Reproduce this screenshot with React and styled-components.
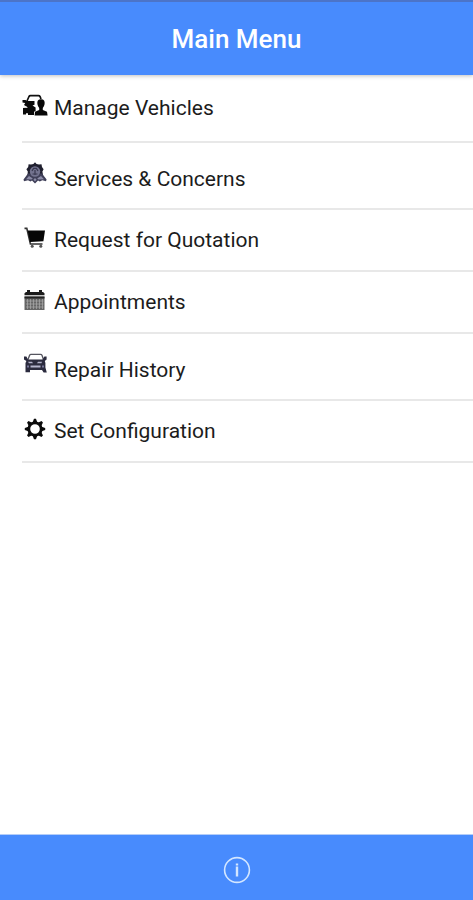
import React from "react";
import {createGlobalStyle, styled} from "styled-components";

const VehiclesIcon = () => (
  <Icon>
    <path d="M5 7 7 2.5Q7.4 1.7 8.4 1.7H16.5Q17.6 1.7 18.1 2.7L19 5" fill="none" stroke="#111" strokeWidth="1.7"/>
    <path d="M0.5 6H3.5L5 7H12.5V10.8L10.5 11.6 13.6 13.4V17L12 17.8V21H6V19.2H4V20.4H1V14L6 13.4 2 11 3.2 9 0.5 8.4Z" fill="#0a0a0a"/>
    <path d="M1.5 12.8 5 13.3" stroke="#eee" strokeWidth="0.9"/>
    <path d="M19 5.3C22 5.3 23 7 22.6 10 22.3 12 21.3 13 20.8 14V16L25 17.8 25.6 21.5H12.6L13 17.8 17.2 16V14C16.7 13 15.7 12 15.4 10 15 7 16 5.3 19 5.3Z" fill="#080808"/>
  </Icon>
);

const ServicesIcon = () => (
  <Icon>
    <path d="M11.4 3 13 1.2 14.6 3 17 3.4 19.5 3.2 20 6 21.6 8.3 20.4 10.5 21 14 13 19 5.5 14 5.8 10.5 4.4 8.3 6.2 6 6.6 3.2 9 3.4Z" fill="#20202f"/>
    <path d="M6 12.5 1.5 18.6 2 20.2 6 19.2 8.5 20.5 10 19.4 13 22.5 16 19.4 17.8 20.5 20.3 19.2 24 20.2 24.6 18.6 20 12.5Z" fill="#3f3f58"/>
    <circle cx="13" cy="10.5" r="5.2" fill="#73738f"/>
    <path d="M10 10 11.6 7.4H14.4L16 10M10.5 13H15.5M13 9V14" fill="none" stroke="#38384f" strokeWidth="1.2"/>
    <path d="M7 15 10.8 17.4 9.4 18.6 4 18.3ZM19 15 15.2 17.4 16.6 18.6 22 18.3ZM13 17 14.6 18.8 13 20.4 11.4 18.8Z" fill="#8b8ba6"/>
  </Icon>
);

const CartIcon = () => (
  <Icon>
    <path d="M2.5 2.4H4.8L8.4 18H20.5" fill="none" stroke="#333" strokeWidth="1.6"/>
    <path d="M5.6 4.6H23L21.4 15.2 8 16Z" fill="#060606"/>
    <circle cx="10.2" cy="20.2" r="1.5" fill="#555"/>
    <circle cx="18.8" cy="20.2" r="1.5" fill="#555"/>
  </Icon>
);

const CalendarIcon = () => (
  <Icon>
    <path d="M2.5 7.2V5.3L4 4H5V2H8V4H17V2H20V4H21L22.5 5.3V7.2Z" fill="#1c1c1c"/>
    <path d="M2.5 8.5H22.5V22H2.5Z" fill="#666"/>
    <path d="M2.5 8.5H22.5V10.5H2.5Z" fill="#222"/>
    <path d="M4 13H21.5M4 16H21.5M4 19H21.5M5.5 11V21M8.5 11V21M11.5 11V21M14.5 11V21M17.5 11V21M20.5 11V21" stroke="#aaa" strokeWidth="0.7"/>
  </Icon>
);

const RepairIcon = () => (
  <Icon>
    <path d="M5.8 8 7.6 3.2Q8 2.3 9 2.3H18.6Q19.6 2.3 20 3.2L21.6 8" fill="none" stroke="#55555f" strokeWidth="1.3"/>
    <path d="M2 4.6H4.4L6 7.4H20.6L22.4 4.6H24.6V7.4L22.8 9 23.4 11V15.6L24.8 20.4H21.6L20 18H8V20.2H3.5V11L4.4 9 2 7.4Z" fill="#2b2b3e"/>
    <path d="M6 9.8H10L11 11.2H7ZM16 9.8H20L19.5 11.2H15ZM8.5 13.6H18.5V15.6H8.5Z" fill="#b4b4cc"/>
    <path d="M5 13.5H7V15.5H5ZM20 13.5H22V15.5H20Z" fill="#77779a"/>
  </Icon>
);

const GearIcon = () => (
  <Icon>
    <g fill="#0b0b0b">
      {[0, 45, 90, 135, 180, 225, 270, 315].map((angle) => (
        <path key={angle} d="M12 1.8H14L15.6 6H10.4Z" transform={`rotate(${angle} 13 12)`}/>
      ))}
    </g>
    <circle cx="13" cy="12" r="6.2" fill="none" stroke="#0b0b0b" strokeWidth="2.8"/>
  </Icon>
);

const menus = [
  {title: "Manage Vehicles", icon: VehiclesIcon, size: "roomy"},
  {title: "Services & Concerns", icon: ServicesIcon, size: "raised"},
  {title: "Request for Quotation", icon: CartIcon},
  {title: "Appointments", icon: CalendarIcon},
  {title: "Repair History", icon: RepairIcon, size: "raised"},
  {title: "Set Configuration", icon: GearIcon},
];

const App = () => {
  return (
    <Page>
      <GlobalStyle/>

      <Header>
        <Title>Main Menu</Title>
      </Header>

      <Main>
        <nav aria-label="Main Menu">
          <MenuList>
            {menus.map(({title, icon: MenuIcon, size}) => (
              <MenuItem key={title}>
                <MenuLink href="#" $size={size}>
                  <MenuIcon/>
                  <span>{title}</span>
                </MenuLink>
              </MenuItem>
            ))}
          </MenuList>
        </nav>
      </Main>

      <Footer>
        <InfoButton type="button" aria-label="Information">
          <InfoIcon>
            <circle cx="14" cy="14" r="12.4" fill="none" stroke="#d3e6ff" strokeWidth="1.6"/>
            <path d="M14 7.5V9.5M14 10.5V20.5" stroke="#d3e6ff" strokeWidth="2.4"/>
          </InfoIcon>
        </InfoButton>
      </Footer>
    </Page>
  );
};

export default App;

const GlobalStyle = createGlobalStyle`
  * {
    box-sizing: border-box;
  }

  body {
    margin: 0;
    background-color: #fff;
    font-family: Roboto, "Liberation Sans", sans-serif;
  }
`

const Page = styled.div`
  display: flex;
  flex-direction: column;
  min-height: 100vh;
`

const Header = styled.header`
  display: flex;
  align-items: center;
  justify-content: center;
  height: 75px;
  border-top: 2px solid #4c74c8;
  background-color: #488bfd;
  box-shadow: 0 1px 4px rgba(0, 0, 0, 0.25);
`

const Title = styled.h1`
  margin: 0;
  color: #fff;
  font-size: 26px;
  font-weight: 500;
  line-height: 30px;
`

const Main = styled.main`
  flex: 1;
  padding-left: 22px;
`

const MenuList = styled.ul`
  margin: 0;
  padding: 0;
  list-style: none;
`

const MenuItem = styled.li`
  border-bottom: 2px solid #e8e8e8;
`

const paddings = {
  roomy: "21px 0",
  raised: "24px 0 17px",
};

const MenuLink = styled.a`
  display: flex;
  align-items: center;
  gap: 6px;
  padding: ${({$size}) => paddings[$size] || "18px 0"};
  color: #1c1c1c;
  font-size: 21px;
  line-height: 24px;
  text-decoration: none;

  svg {
    margin-top: ${({$size}) => ($size === "raised" ? "-12px" : "-4px")};
  }
`

const Icon = styled.svg.attrs({
  viewBox: "0 0 26 24",
  "aria-hidden": true,
})`
  flex: none;
  width: 26px;
  height: 24px;
`

const Footer = styled.footer`
  display: flex;
  align-items: center;
  justify-content: center;
  height: 66px;
  padding-top: 4px;
  border-top: 1px solid #b4cdf8;
  background-color: #488bfd;
`

const InfoButton = styled.button`
  display: flex;
  padding: 0;
  border: 0;
  background: none;
  cursor: pointer;
`

const InfoIcon = styled.svg.attrs({
  viewBox: "0 0 28 28",
  "aria-hidden": true,
})`
  width: 28px;
  height: 28px;
`
